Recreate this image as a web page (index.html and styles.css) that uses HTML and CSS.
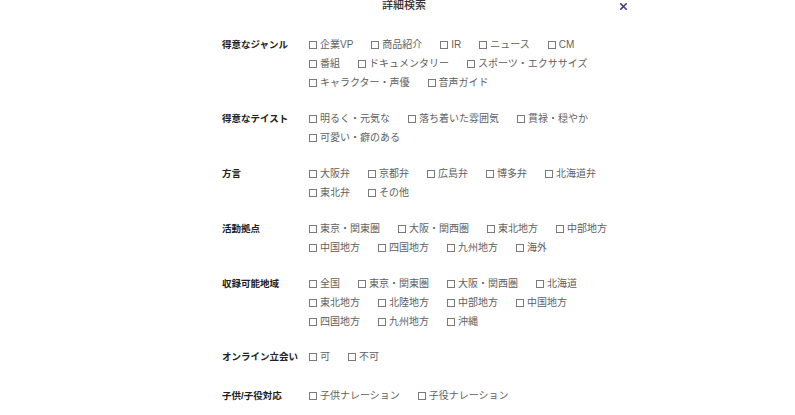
FILE: index.html
```html
<!DOCTYPE html>
<html lang="ja">
<head>
<meta charset="utf-8">
<title>詳細検索</title>
<link rel="stylesheet" href="styles.css">
</head>
<body>
<div class="modal">
  <div class="header">
    <span></span>
    <h1 class="title">詳細検索</h1>
    <button class="close" type="button" aria-label="閉じる">
      <svg width="7" height="7" viewBox="0 0 7 7"><path d="M0.8 0.8 L6.2 6.2 M6.2 0.8 L0.8 6.2" stroke="currentColor" stroke-width="1.6" stroke-linecap="square" fill="none"/></svg>
    </button>
  </div>
  <form class="form">
    <div class="group">
      <div class="label">得意なジャンル</div>
      <div class="options">
        <label class="opt"><span class="box"></span>企業VP</label>
        <label class="opt"><span class="box"></span>商品紹介</label>
        <label class="opt"><span class="box"></span>IR</label>
        <label class="opt"><span class="box"></span>ニュース</label>
        <label class="opt"><span class="box"></span>CM</label>
        <label class="opt"><span class="box"></span>番組</label>
        <label class="opt"><span class="box"></span>ドキュメンタリー</label>
        <label class="opt"><span class="box"></span>スポーツ・エクササイズ</label>
        <label class="opt"><span class="box"></span>キャラクター・声優</label>
        <label class="opt"><span class="box"></span>音声ガイド</label>
      </div>
    </div>
    <div class="group">
      <div class="label">得意なテイスト</div>
      <div class="options">
        <label class="opt"><span class="box"></span>明るく・元気な</label>
        <label class="opt"><span class="box"></span>落ち着いた雰囲気</label>
        <label class="opt"><span class="box"></span>貫禄・穏やか</label>
        <label class="opt"><span class="box"></span>可愛い・癖のある</label>
      </div>
    </div>
    <div class="group">
      <div class="label">方言</div>
      <div class="options">
        <label class="opt"><span class="box"></span>大阪弁</label>
        <label class="opt"><span class="box"></span>京都弁</label>
        <label class="opt"><span class="box"></span>広島弁</label>
        <label class="opt"><span class="box"></span>博多弁</label>
        <label class="opt"><span class="box"></span>北海道弁</label>
        <label class="opt"><span class="box"></span>東北弁</label>
        <label class="opt"><span class="box"></span>その他</label>
      </div>
    </div>
    <div class="group">
      <div class="label">活動拠点</div>
      <div class="options">
        <label class="opt"><span class="box"></span>東京・関東圏</label>
        <label class="opt"><span class="box"></span>大阪・関西圏</label>
        <label class="opt"><span class="box"></span>東北地方</label>
        <label class="opt"><span class="box"></span>中部地方</label>
        <label class="opt"><span class="box"></span>中国地方</label>
        <label class="opt"><span class="box"></span>四国地方</label>
        <label class="opt"><span class="box"></span>九州地方</label>
        <label class="opt"><span class="box"></span>海外</label>
      </div>
    </div>
    <div class="group">
      <div class="label">収録可能地域</div>
      <div class="options">
        <label class="opt"><span class="box"></span>全国</label>
        <label class="opt"><span class="box"></span>東京・関東圏</label>
        <label class="opt"><span class="box"></span>大阪・関西圏</label>
        <label class="opt"><span class="box"></span>北海道</label>
        <label class="opt"><span class="box"></span>東北地方</label>
        <label class="opt"><span class="box"></span>北陸地方</label>
        <label class="opt"><span class="box"></span>中部地方</label>
        <label class="opt"><span class="box"></span>中国地方</label>
        <label class="opt"><span class="box"></span>四国地方</label>
        <label class="opt"><span class="box"></span>九州地方</label>
        <label class="opt"><span class="box"></span>沖縄</label>
      </div>
    </div>
    <div class="group group-online">
      <div class="label">オンライン立会い</div>
      <div class="options">
        <label class="opt"><span class="box"></span>可</label>
        <label class="opt"><span class="box"></span>不可</label>
      </div>
    </div>
    <div class="group group-last">
      <div class="label">子供/子役対応</div>
      <div class="options">
        <label class="opt"><span class="box"></span>子供ナレーション</label>
        <label class="opt"><span class="box"></span>子役ナレーション</label>
      </div>
    </div>
  </form>
</div>
</body>
</html>
```

FILE: styles.css
```css
html, body {
  margin: 0;
  padding: 0;
  background: #ffffff;
}

body {
  font-family: "Liberation Sans", "Noto Sans CJK JP", sans-serif;
  color: #555555;
}

.modal {
  width: 446px;
  margin-left: 181px;
}

.header {
  display: grid;
  grid-template-columns: 1fr auto 1fr;
  align-items: center;
  height: 11px;
}

.title {
  margin: 0;
  font-size: 11px;
  line-height: 11px;
  font-weight: 500;
  color: #333333;
  margin-top: -1px;
}

.close {
  justify-self: end;
  width: 7px;
  height: 7px;
  padding: 0;
  margin: 1px 0 0 0;
  border: 0;
  background: none;
  color: #4b3b8f;
  display: flex;
}

.form {
  padding-top: 24px;
  padding-left: 41px;
}

.group {
  display: grid;
  grid-template-columns: 87px 308px;
  margin-bottom: 17px;
}

.group-online {
  margin-top: -1px;
}

.group-last {
  margin-top: 20px;
}

.label {
  font-size: 9.5px;
  line-height: 19px;
  font-weight: bold;
  color: #222222;
  white-space: nowrap;
}

.options {
  display: flex;
  flex-wrap: wrap;
  column-gap: 18px;
}

.opt {
  display: inline-flex;
  align-items: center;
  gap: 3px;
  font-size: 10px;
  line-height: 19px;
  height: 19px;
  color: #5f5f5f;
  white-space: nowrap;
}

.box {
  display: inline-block;
  box-sizing: border-box;
  width: 8px;
  height: 8px;
  border: 1px solid #7a7a7a;
  background: #fff;
}
```
